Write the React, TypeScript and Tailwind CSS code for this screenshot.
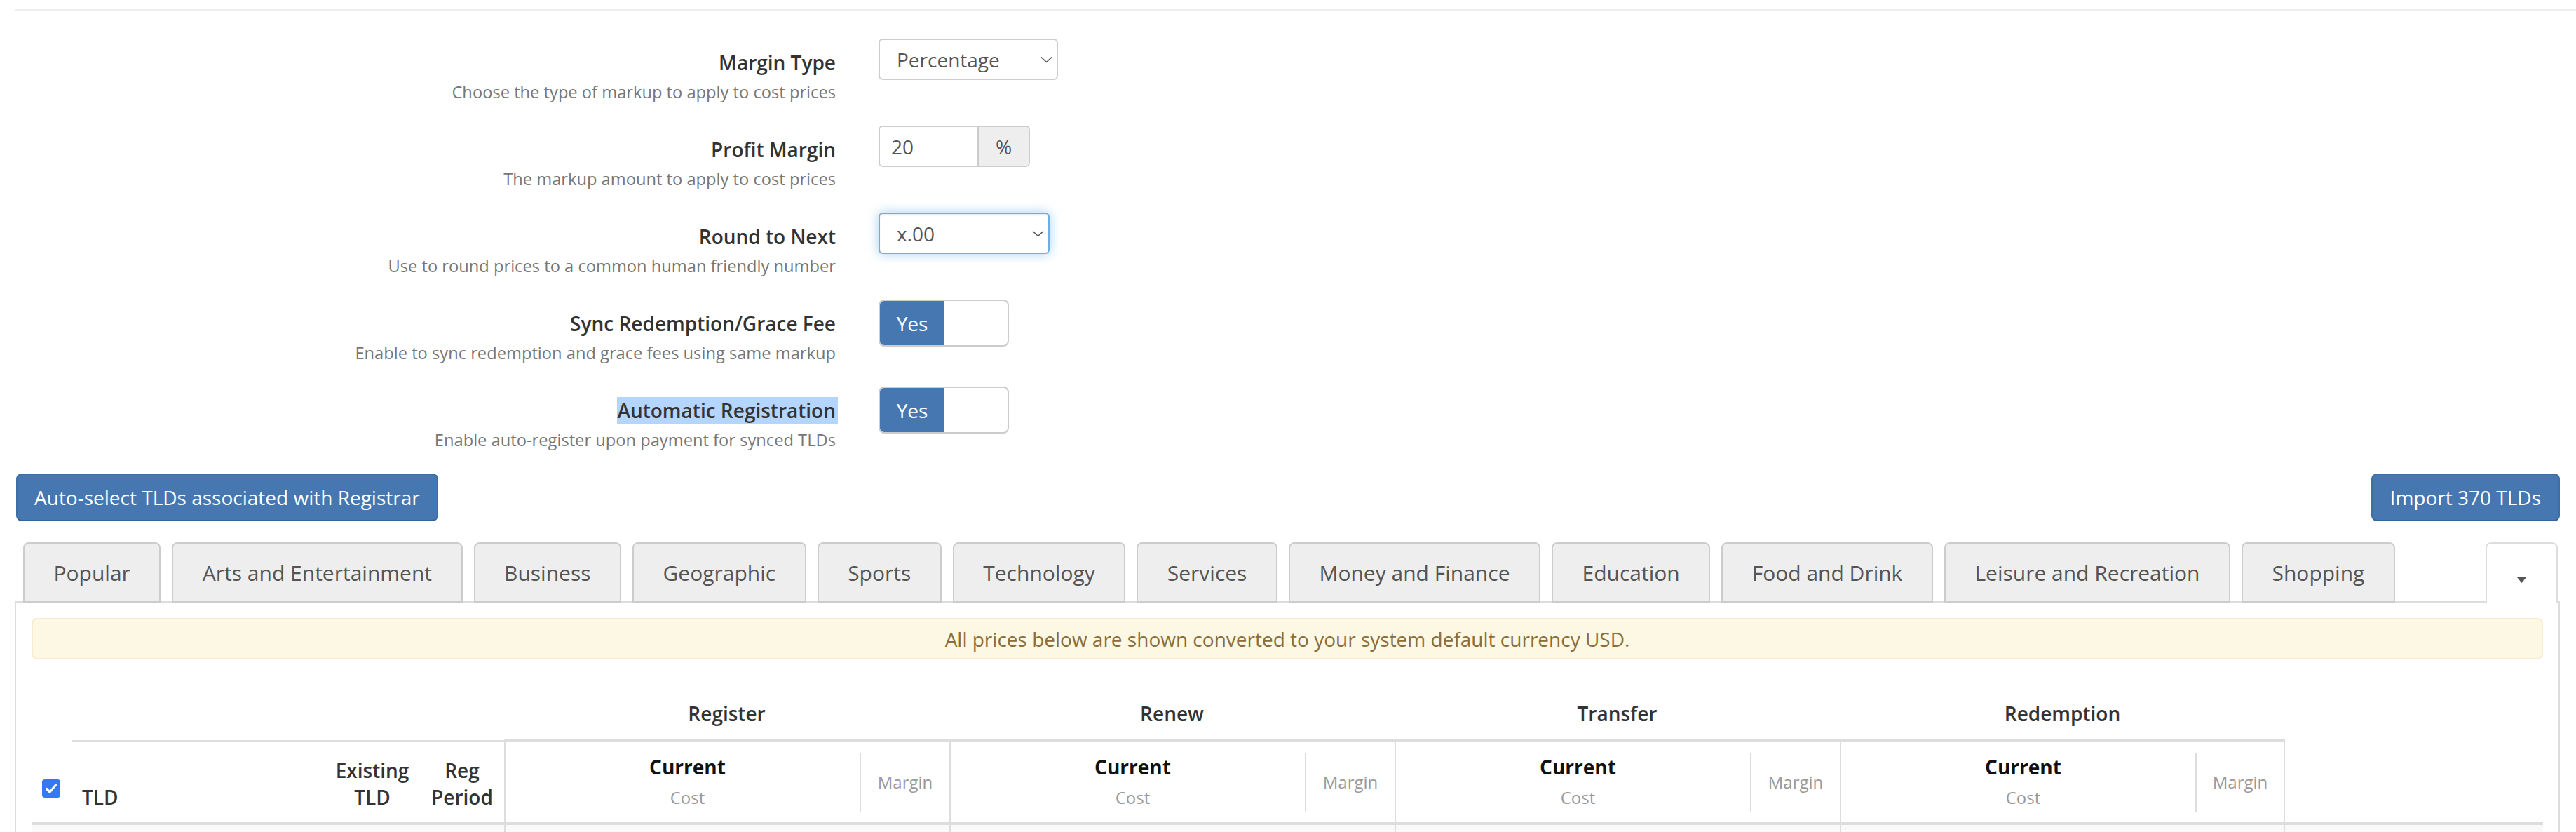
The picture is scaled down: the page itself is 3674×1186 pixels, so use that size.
import React from "react";

const Chevron = () => (
  <svg width="17" height="10" viewBox="0 0 17 10" fill="none">
    <path d="M1 1.5l7.5 7 7.5-7" stroke="#555" strokeWidth="1.6" />
  </svg>
);

function Row({
  label,
  desc,
  children,
  highlight,
}: {
  label: string;
  desc: string;
  children: React.ReactNode;
  highlight?: boolean;
}) {
  return (
    <div className="flex h-[124px]">
      <div className="w-[1192px] shrink-0 pt-[14px] text-right">
        <div className="text-[28px] leading-[40px] font-semibold text-[#333]">
          {highlight ? (
            <span className="bg-[#b4d5fe] pr-[3px] mr-[-3px]">{label}</span>
          ) : (
            label
          )}
        </div>
        <div className="mt-[6px] text-[23.7px] leading-[32px] text-[#777]">{desc}</div>
      </div>
      <div className="ml-[61px]">{children}</div>
    </div>
  );
}

const Toggle = () => (
  <div className="w-[186px] h-[67px] border-2 border-[#ccc] rounded-[8px] overflow-hidden flex bg-white">
    <div className="w-[92px] h-full bg-[#4677b0] text-white text-[28px] flex items-center justify-center">
      Yes
    </div>
  </div>
);

const tabs = [
  "Popular",
  "Arts and Entertainment",
  "Business",
  "Geographic",
  "Sports",
  "Technology",
  "Services",
  "Money and Finance",
  "Education",
  "Food and Drink",
  "Leisure and Recreation",
  "Shopping",
];

const groups = ["Register", "Renew", "Transfer", "Redemption"];

export default function App() {
  return (
    <div className="w-[3674px] h-[1186px] overflow-hidden bg-white font-['Open_Sans',sans-serif] text-[#333]">
      <div className="ml-[21px] mt-[13px] h-[2px] bg-[#eee]" />
      <div className="pt-[40px]">
        <Row label="Margin Type" desc="Choose the type of markup to apply to cost prices">
          <div className="w-[256px] h-[59px] border-2 border-[#ccc] rounded-[6px] flex items-center justify-between pl-[24px] pr-[6px] text-[28px] text-[#555] bg-white">
            <span>Percentage</span>
            <Chevron />
          </div>
        </Row>
        <Row label="Profit Margin" desc="The markup amount to apply to cost prices">
          <div className="w-[216px] h-[59px] border-2 border-[#ccc] rounded-[6px] flex overflow-hidden text-[28px] text-[#555]">
            <div className="w-[141px] h-full flex items-center pl-[16px] border-r-2 border-[#ccc] bg-white">20</div>
            <div className="flex-1 h-full flex items-center justify-center bg-[#eee]">%</div>
          </div>
        </Row>
        <Row label="Round to Next" desc="Use to round prices to a common human friendly number">
          <div className="w-[244px] h-[59px] border-2 border-[#66afe9] rounded-[6px] flex items-center justify-between pl-[24px] pr-[6px] text-[28px] text-[#555] bg-white shadow-[inset_0_2px_2px_rgba(0,0,0,0.075),0_0_16px_rgba(102,175,233,0.6)]">
            <span>x.00</span>
            <Chevron />
          </div>
        </Row>
        <Row label="Sync Redemption/Grace Fee" desc="Enable to sync redemption and grace fees using same markup">
          <Toggle />
        </Row>
        <Row label="Automatic Registration" desc="Enable auto-register upon payment for synced TLDs" highlight>
          <Toggle />
        </Row>
      </div>

      <div className="ml-[23px] mr-[23px] flex justify-between">
        <button className="h-[68px] px-[24px] bg-[#4677b0] border-2 border-[#3f6ea6] border-b-[#34629a] rounded-[8px] text-white text-[28px]">
          Auto-select TLDs associated with Registrar
        </button>
        <button className="h-[68px] px-[25px] bg-[#4677b0] border-2 border-[#3f6ea6] border-b-[#34629a] rounded-[8px] text-white text-[28px]">
          Import 370 TLDs
        </button>
      </div>

      <div className="mt-[30px] ml-[21px] mr-[23px] h-[86px] border-b-2 border-[#ddd] pl-[12px] flex items-end gap-[16px]">
        {tabs.map((t) => (
          <div
            key={t}
            className="h-[86px] mb-[-2px] border-2 border-[#ccc] rounded-t-[8px] bg-[#eee] px-[41.5px] text-[30px] text-[#555] flex items-center whitespace-nowrap"
          >
            {t}
          </div>
        ))}
        <div className="ml-auto mr-[3px] w-[103px] h-[86px] mb-[-2px] border-2 border-b-0 border-[#ddd] rounded-t-[8px] bg-white flex items-center justify-center pt-[20px]">
          <svg width="13" height="8" viewBox="0 0 13 8">
            <path d="M0 0h13L6.5 8z" fill="#555" />
          </svg>
        </div>
      </div>

      <div className="ml-[21px] mr-[23px] h-[400px] border-x-2 border-[#ddd] px-[22px] pt-[22px]">
        <div className="h-[59px] border-2 border-[#faebcc] bg-[#fcf8e3] rounded-[8px] flex items-center justify-center text-[28px] leading-[40px] text-[#8a6d3b]">
          All prices below are shown converted to your system default currency USD.
        </div>

        {/* group header row */}
        <div className="flex h-[115px]">
          <div className="w-[674px] shrink-0" />
          {groups.map((g) => (
            <div
              key={g}
              className="w-[635px] shrink-0 border-b-2 border-[#ddd] flex items-end justify-center pb-[16px] text-[28px] leading-[40px] font-semibold text-[#333]"
            >
              {g}
            </div>
          ))}
        </div>

        {/* sub header row */}
        <div className="flex h-[121px] border-b-4 border-[#ddd]">
          <div className="w-[57px] shrink-0 pl-[15px] pt-[56px]">
            <div className="w-[26px] h-[26px] rounded-[4px] bg-[#3478f6] flex items-center justify-center">
              <svg width="18" height="16" viewBox="0 0 18 16" fill="none">
                <path d="M2.5 8.5l4.5 4.5 8.5-10" stroke="#fff" strokeWidth="3.2" strokeLinecap="round" strokeLinejoin="round" />
              </svg>
            </div>
          </div>
          <div className="w-[361px] shrink-0 border-t-2 border-[#ddd] flex items-end px-[15px] pb-[17px] text-[28px] leading-[38px] font-semibold text-[#333]">
            TLD
          </div>
          <div className="w-[136px] shrink-0 border-t-2 border-[#ddd] flex items-end justify-center pb-[17px] text-center text-[28px] leading-[38px] font-semibold text-[#333]">
            <div>
              Existing
              <br />
              TLD
            </div>
          </div>
          <div className="w-[120px] shrink-0 border-t-2 border-[#ddd] flex items-end justify-center pb-[17px] text-center text-[28px] leading-[38px] font-semibold text-[#333]">
            <div>
              Reg
              <br />
              Period
            </div>
          </div>
          {groups.map((g, i) => (
            <div
              key={g}
              className={
                i === 3
                  ? "w-[635px] shrink-0 border-t-2 border-l-2 border-r-2 border-[#ddd] flex"
                  : "w-[635px] shrink-0 border-t-2 border-l-2 border-[#ddd] flex"
              }
            >
              <div className="w-[507px] shrink-0 mt-[16px] h-[84px] border-r-2 border-[#ddd] pl-[14px] text-center">
                <div className="text-[28px] leading-[40px] font-bold text-[#111]">Current</div>
                <div className="mt-[8px] text-[24px] leading-[32px] text-[#999]">Cost</div>
              </div>
              <div className="flex-1 mt-[16px] h-[84px] flex items-center justify-center text-[24px] leading-[32px] text-[#999]">
                Margin
              </div>
            </div>
          ))}
          <div className="flex-1" />
        </div>

        {/* first body row (cut off) */}
        <div className="flex h-[40px] bg-[#f9f9f9]">
          <div className="w-[674px] shrink-0" />
          {groups.map((g, i) => (
            <div
              key={g}
              className={
                i === 3
                  ? "w-[635px] shrink-0 border-l-2 border-r-2 border-[#ddd]"
                  : "w-[635px] shrink-0 border-l-2 border-[#ddd]"
              }
            />
          ))}
          <div className="flex-1" />
        </div>
      </div>
    </div>
  );
}
